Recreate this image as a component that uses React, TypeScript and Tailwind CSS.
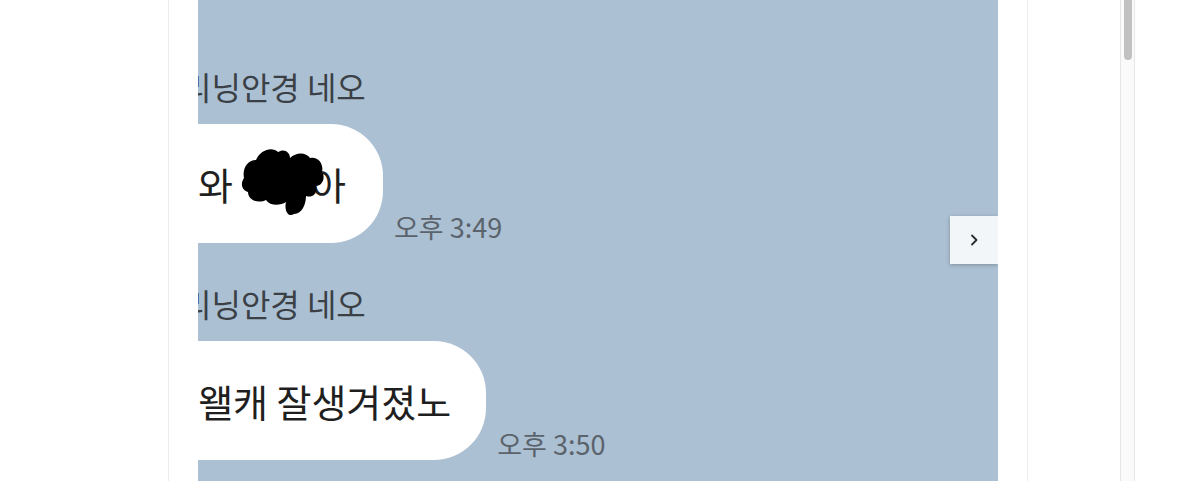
function Scribble() {
  return (
    <svg width="86" height="74" viewBox="0 0 86 74" className="absolute left-[82px] top-[20px]" aria-hidden>
      <path
        d="M4 34 C2 24 8 16 16 16 C20 6 32 2 38 8 C44 4 50 8 50 14 C56 8 66 8 70 14 C78 12 84 20 82 28 C86 34 82 42 76 42 C78 50 72 54 66 52 C66 60 62 70 54 70 C48 74 44 66 46 58 C40 62 30 62 26 56 C18 60 8 56 8 48 C2 46 0 40 4 34 Z"
        fill="#000"
      />
    </svg>
  );
}

function Bubble({ children, blob, pr }: { children: React.ReactNode; blob?: boolean; pr: string }) {
  return (
    <div className={`relative -ml-[40px] flex h-[119px] items-center rounded-r-[52px] bg-white pl-[40px] text-[38px] leading-none text-[#1f1f1f] ${pr}`}>
      {children}
      {blob && <Scribble />}
    </div>
  );
}

function Message({ text, time, blob, pr }: { text: React.ReactNode; time: string; blob?: boolean; pr: string }) {
  return (
    <div className="flex flex-col">
      <div className="-ml-[16px] text-[32px] leading-none text-[#3b4046]">리닝안경 네오</div>
      <div className="mt-[22px] flex items-end gap-[11px]">
        <Bubble blob={blob} pr={pr}>
          {text}
        </Bubble>
        <span className="mb-[3px] text-[27px] leading-none text-[#5b636c]">{time}</span>
      </div>
    </div>
  );
}

export default function App() {
  return (
    <div
      className="flex h-[481px] w-[1195px] overflow-hidden bg-white"
      style={{ fontFamily: '"Noto Sans CJK KR", "Noto Sans", sans-serif' }}
    >
      <div className="w-[168px] shrink-0" />
      <div className="flex w-[860px] shrink-0 border-x border-[#ececec] pl-[29px]">
        <div className="relative h-[481px] w-[800px] overflow-hidden bg-[#abc0d2] pt-[70px]">
          <div className="flex flex-col gap-[44px]">
            <Message
              blob
              pr="pr-[37px]"
              time="오후 3:49"
              text={
                <span>
                  와<span className="inline-block w-[78px]" />아
                </span>
              }
            />
            <Message pr="pr-[35px]" time="오후 3:50" text="왤캐 잘생겨졌노" />
          </div>
          <button className="absolute right-0 top-[216px] flex h-[48px] w-[48px] items-center justify-center bg-[#f3f6f9] shadow-[0_1px_4px_rgba(0,0,0,0.25)]">
            <svg width="14" height="14" viewBox="0 0 14 14" fill="none">
              <path d="M5 2.5 L9.5 7 L5 11.5" stroke="#2b2b2b" strokeWidth="1.8" strokeLinecap="round" strokeLinejoin="round" />
            </svg>
          </button>
        </div>
      </div>
      <div className="w-[92px] shrink-0" />
      <div className="relative h-full w-[15px] shrink-0 border-x border-[#e6e6e6] bg-[#fafafa]">
        <div className="absolute left-[3px] top-0 h-[60px] w-[8px] rounded-b-full bg-[#c1c1c1]" />
      </div>
    </div>
  );
}
